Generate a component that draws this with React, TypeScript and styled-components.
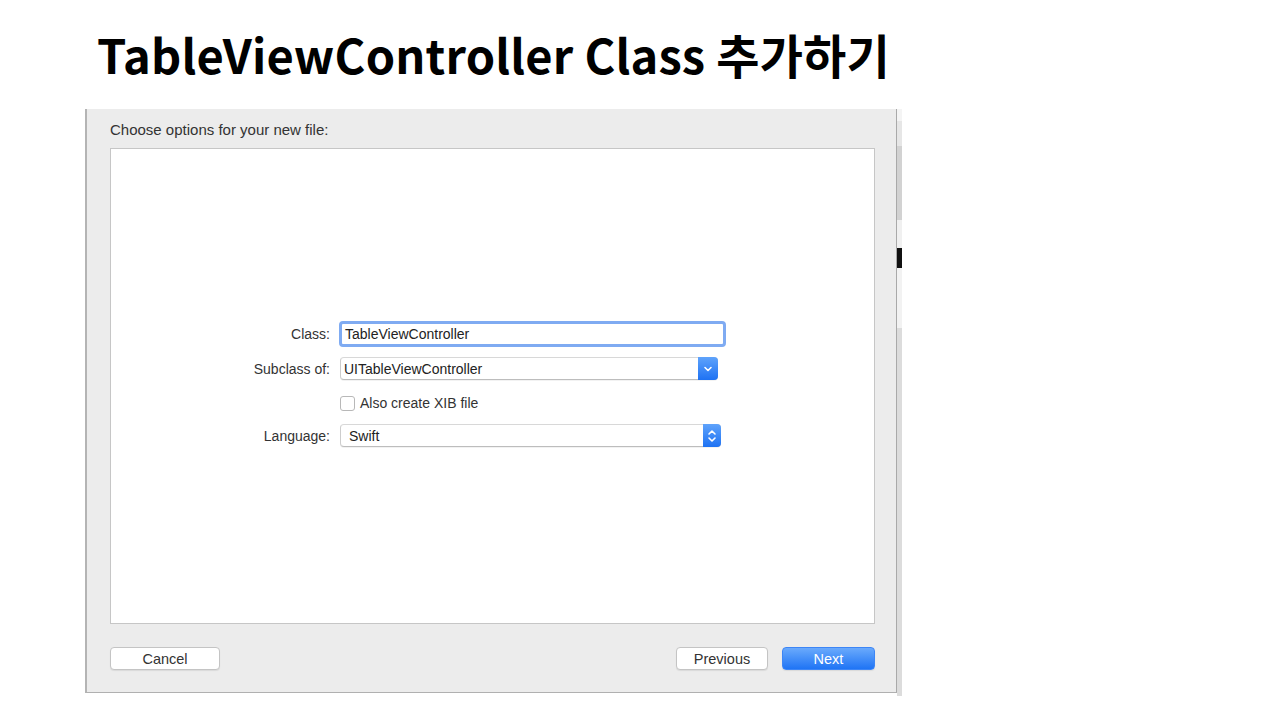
import React from 'react';
import styled, { createGlobalStyle } from 'styled-components';

const GlobalStyle = createGlobalStyle`
  html, body {
    margin: 0;
    padding: 0;
    background: #ffffff;
  }
  body {
    width: 1280px;
    height: 720px;
    overflow: hidden;
    font-family: "Liberation Sans", Arial, sans-serif;
  }
`

const Slide = styled.div`
  width: 1280px;
  height: 720px;
  display: flex;
  flex-direction: column;
`

const Title = styled.h1`
  margin: 22px 0 0 97px;
  height: 87px;
  font-family: "Noto Sans CJK KR", "Noto Sans", sans-serif;
  font-weight: 700;
  font-size: 47px;
  line-height: 64px;
  color: #000;
  letter-spacing: 0.2px;
`

const Shot = styled.div`
  margin-left: 85px;
  width: 817px;
  height: 587px;
  display: flex;
`

const Dialog = styled.div`
  width: 812px;
  height: 584px;
  box-sizing: border-box;
  background: #ececec;
  border-left: 2px solid #b4b4b4;
  border-right: 1px solid #a9a9a9;
  border-bottom: 1px solid #b0b0b0;
  display: flex;
  flex-direction: column;
  padding: 0 21px 0 23px;
  flex-shrink: 0;
`

const Header = styled.div`
  height: 39px;
  flex-shrink: 0;
  display: flex;
  align-items: center;
  font-size: 15px;
  color: #333;
  padding-top: 2px;
  box-sizing: border-box;
`

const Panel = styled.div`
  width: 765px;
  height: 476px;
  flex-shrink: 0;
  box-sizing: border-box;
  background: #fff;
  border: 1px solid #c6c6c6;
  padding-top: 172px;
`

const Row = styled.div<{ $top: number; $height: number }>`
  display: grid;
  grid-template-columns: 219px 1fr;
  column-gap: 10px;
  align-items: center;
  margin-top: ${(p) => p.$top}px;
  height: ${(p) => p.$height}px;
`

const Label = styled.div`
  text-align: right;
  font-size: 14px;
  color: #333;
`

const TextField = styled.div`
  width: 378px;
  height: 20px;
  border: 3px solid #7fabf2;
  border-radius: 4px;
  background: #fff;
  display: flex;
  align-items: center;
  padding-left: 3px;
  font-size: 14px;
  color: #222;
  margin-left: -1px;
`

const Popup = styled.div<{ $width: number }>`
  width: ${(p) => p.$width}px;
  height: 21px;
  border: 1px solid #cdcdcd;
  border-top-color: #d8d8d8;
  border-bottom-color: #bdbdbd;
  border-radius: 4px;
  background: #fff;
  display: flex;
  align-items: center;
  font-size: 14px;
  color: #222;
  box-shadow: 0 1px 0 rgba(0, 0, 0, 0.05);
`

const PopupText = styled.div<{ $pad: number }>`
  flex: 1;
  padding-left: ${(p) => p.$pad}px;
`

const Arrow = styled.div<{ $width: number }>`
  width: ${(p) => p.$width}px;
  height: 23px;
  margin: -1px -1px -1px 0;
  border-radius: 0 4px 4px 0;
  background: linear-gradient(#5fa3fb, #1e72f3);
  display: flex;
  align-items: center;
  justify-content: center;
`

const CheckRow = styled.div`
  display: flex;
  align-items: center;
  gap: 5px;
  font-size: 14px;
  color: #333;
`

const Checkbox = styled.div`
  width: 13px;
  height: 13px;
  border: 1px solid #b8b8b8;
  border-radius: 3px;
  background: #fff;
`

const Footer = styled.div`
  margin-top: 23px;
  height: 23px;
  flex-shrink: 0;
  display: flex;
  align-items: center;
  gap: 14px;
`

const Button = styled.div<{ $width: number; $primary?: boolean }>`
  width: ${(p) => p.$width}px;
  height: 21px;
  border-radius: 4px;
  border: 1px solid ${(p) => (p.$primary ? '#3d86f6' : '#c4c4c4')};
  background: ${(p) => (p.$primary ? 'linear-gradient(#6aaafc, #1f74f5)' : '#fff')};
  color: ${(p) => (p.$primary ? '#fff' : '#333')};
  display: flex;
  align-items: center;
  justify-content: center;
  font-size: 14.5px;
  box-shadow: 0 1px 1px rgba(0, 0, 0, 0.08);
`

const Spacer = styled.div`
  flex: 1;
`

const Strip = styled.div`
  width: 5px;
  display: flex;
  flex-direction: column;
`

const StripPart = styled.div<{ $h: number; $c: string }>`
  height: ${(p) => p.$h}px;
  background: ${(p) => p.$c};
`

function ChevronDown() {
  return (
    <svg width="10" height="8" viewBox="0 0 10 8">
      <path d="M2 2.5 L5 5.5 L8 2.5" stroke="#fff" strokeWidth="1.6" fill="none" strokeLinecap="round" strokeLinejoin="round" />
    </svg>
  )
}

function ChevronUpDown() {
  return (
    <svg width="10" height="16" viewBox="0 0 10 16">
      <path d="M2 6 L5 3 L8 6" stroke="#fff" strokeWidth="1.6" fill="none" strokeLinecap="round" strokeLinejoin="round" />
      <path d="M2 10 L5 13 L8 10" stroke="#fff" strokeWidth="1.6" fill="none" strokeLinecap="round" strokeLinejoin="round" />
    </svg>
  )
}

export default function App() {
  return (
    <>
      <GlobalStyle />
      <Slide>
        <Title>TableViewController Class 추가하기</Title>
        <Shot>
          <Dialog>
            <Header>Choose options for your new file:</Header>
            <Panel>
              <Row $top={0} $height={26}>
                <Label>Class:</Label>
                <TextField>TableViewController</TextField>
              </Row>
              <Row $top={10} $height={23}>
                <Label>Subclass of:</Label>
                <Popup $width={376}>
                  <PopupText $pad={3}>UITableViewController</PopupText>
                  <Arrow $width={20}><ChevronDown /></Arrow>
                </Popup>
              </Row>
              <Row $top={15} $height={16}>
                <span />
                <CheckRow>
                  <Checkbox />
                  Also create XIB file
                </CheckRow>
              </Row>
              <Row $top={13} $height={23}>
                <Label>Language:</Label>
                <Popup $width={379}>
                  <PopupText $pad={8}>Swift</PopupText>
                  <Arrow $width={18}><ChevronUpDown /></Arrow>
                </Popup>
              </Row>
            </Panel>
            <Footer>
              <Button $width={108}>Cancel</Button>
              <Spacer />
              <Button $width={90}>Previous</Button>
              <Button $width={91} $primary>Next</Button>
            </Footer>
          </Dialog>
          <Strip>
            <StripPart $h={12} $c="#f4f4f4" />
            <StripPart $h={25} $c="#e6e6e6" />
            <StripPart $h={74} $c="#d2d2d2" />
            <StripPart $h={28} $c="#f0f0f0" />
            <StripPart $h={20} $c="#111" />
            <StripPart $h={60} $c="#f2f2f2" />
            <StripPart $h={368} $c="#dcdcdc" />
          </Strip>
        </Shot>
      </Slide>
    </>
  )
}
